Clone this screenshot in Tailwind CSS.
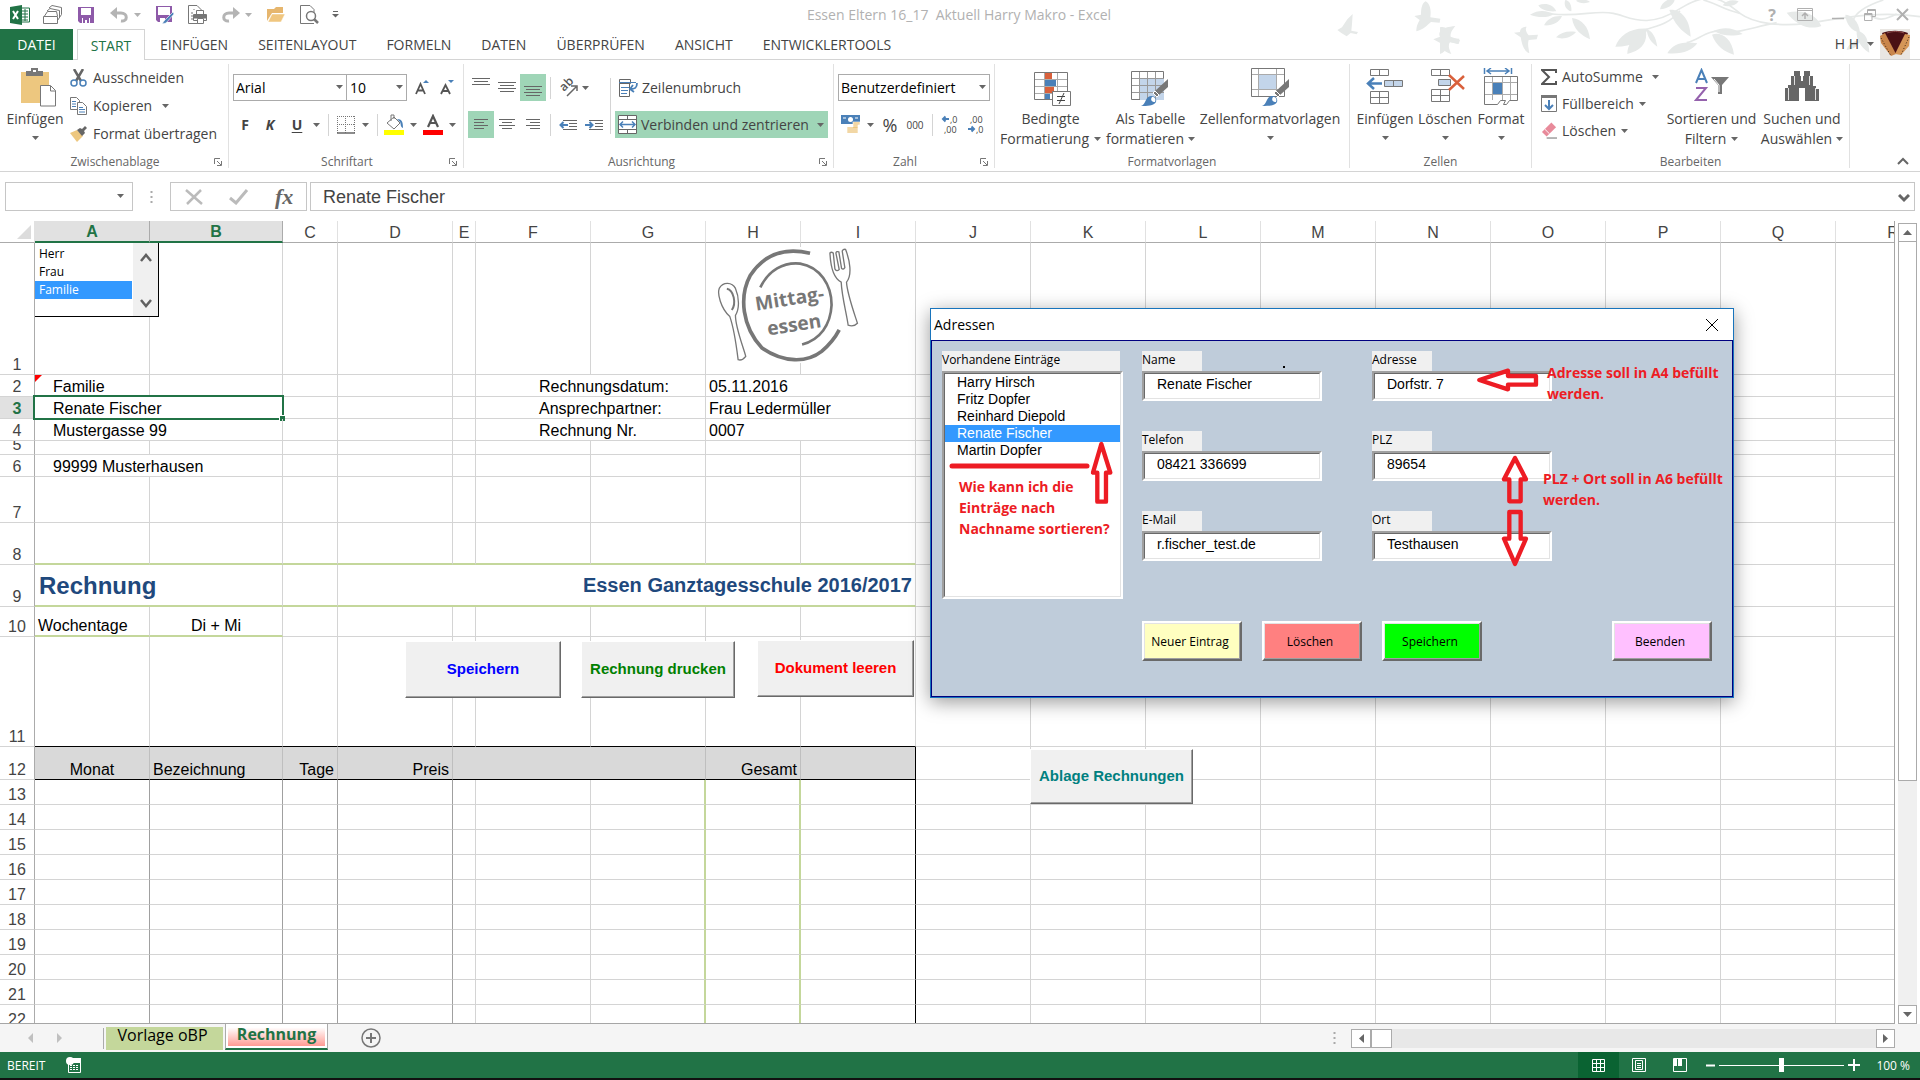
<!DOCTYPE html>
<html lang="de">
<head>
  <meta charset="UTF-8" />
  <meta name="viewport" content="width=device-width, initial-scale=1.0"/>
  <title>Essen Eltern 16_17  Aktuell Harry Makro - Excel</title>
  <script src="https://cdn.jsdelivr.net/npm/@tailwindcss/browser@4"></script>
</head>
<body class="h-screen flex flex-col overflow-hidden bg-white font-['Open_Sans',sans-serif] text-sm text-[#444]">

  <!-- Shared shapes -->
  <svg class="hidden">
    <symbol id="caret" viewBox="0 0 7 4"><path d="M0 0h7L3.500 4z" fill="#666"/></symbol>
    <symbol id="launcher" viewBox="0 0 8 8"><path d="M.5 6V.5H6M3 3l4 4M7.500 3v4.500H3" fill="none" stroke="#777"/></symbol>
    <symbol id="brush" viewBox="0 0 28 28"><path d="M27 1v8l-9 8-4-4z" fill="#777"/><path d="M14 13l4 4-2 2-4-4z" fill="#777" stroke="#fff"/><path d="M0 28c5-1 4-10 10-10 4 0 6 3 5 6-2 4-9 4-15 4z" fill="#4a80b8"/><path d="M11 19c3 0 4 2 3 5-3 0-5-2-3-5z" fill="#fff"/></symbol>
  </svg>

  <!-- Title bar -->
  <header class="relative shrink-0">
    <svg class="absolute right-0 top-0" width="590" height="58" viewBox="0 0 1770 174" fill="#e6e9e8" stroke="none">
      <!-- birds -->
      <g transform="translate(-1050 0)">
        <path d="M1072 90l14-8 16-24 16-16-2 30-2 20 20 4-4 7-18-4-12 10-16-10z"/>
        <path d="M1303 48l20-4c0-20 4-36 14-40 12 6 18 26 14 48l30 4-2 12-26-2c-12 10-22 22-44 28 0-18 6-26 10-34z"/>
        <path d="M1360 118l20-8c-6-14 2-28 46-32-10 12-16 22-14 32l28 10-4 12-26-6c-6 10-4 18 4 36-20-4-30-18-32-32z"/>
      </g>
      <g transform="translate(330 0)">
        <path d="M0 82c14-4 28 4 26 32l32 2-4 16-26-6c-2 12-8 28-28 36z"/>
        <path d="M222 98l18-2c0-10 8-16 20-16-6 8 0 18 6 26l28-2-4 14-24 2c-4 14 0 24 2 40-18-8-22-26-26-48z"/>
        <path d="M270 44c30-18 52-10 72-2-22 14-50 10-72 2zM295 16c20-8 44-4 54 18-26 2-46-4-54-18zM376 0c12 2 20 14 18 34-16-4-24-20-18-34zM408 2c14-6 34-4 42 4-14 6-34 4-42-4zM312 76c10-20 30-30 54-28-8 20-30 30-54 28zM396 54c30 4 50 26 54 64-26-12-50-30-54-64zM348 112c14-14 34-20 60-16-14 16-38 24-60 16z"/>
        <path d="M526 140c12-32 44-58 98-54-14 34-44 54-98 54zM562 162c0-26 16-54 56-66 4 32-14 56-56 66zM620 88c16 4 28 24 32 52-18-12-30-28-32-52zM660 28c4-20 22-32 44-34 2 16-16 32-44 34zM688 30c28-4 62 20 64 80-28-16-50-40-64-80zM682 160c16-28 44-38 90-30-16 22-46 34-90 30zM816 104c22-10 60 6 66 60-28-8-54-26-66-60zM822 92c26-12 60-10 86 10-32 8-62 6-86-10zM848 16c12-16 30-18 48-12-10 14-30 18-48 12z"/>
        <path d="M1040 38c44-10 86 0 104 40-36 14-76-4-104-40zM1216 44c18 0 42 20 44 54-26-6-42-26-44-54zM1220 150c4-16 20-26 38-30 0 16-16 28-38 30zM1250 92c30 4 36 32 38 66-26-16-40-40-38-66z"/>
        <g fill="none" stroke="#e6e9e8" stroke-width="5">
          <path d="M336 42C420 50 470 30 520 40s100 50 200-14S860 10 900 40s120 40 200 30 200-40 340-20"/>
          <path d="M610 92c30-14 70-12 110-60M740 128c40-10 60-40 110-34s80-10 160-26M900 40c-50-10-70-30-110-40M1240 60c10-30 60-50 90-60M1290 46c30 20 50 10 80-4"/>
        </g>
      </g>
    </svg>

    <div class="relative h-[29px] flex items-center justify-between pl-[10px] pr-[11px]">
      <div class="flex items-center">
        <svg width="20" height="20" viewBox="0 0 20 20"><path d="M10 3h9.500v14H10" fill="#fff" stroke="#217346"/><path d="M12 6h6M12 9h6M12 12h6M12 15h6M15 4v12" stroke="#217346"/><path d="M0 2l12-2v20L0 18z" fill="#217346"/><path d="M3 6l5 8M8 6l-5 8" stroke="#fff" stroke-width="2"/></svg>
        <svg class="ml-[13px]" width="20" height="20" viewBox="0 0 20 20" fill="#fff" stroke="#777"><path d="M6 3l3-2.500 9.500 2v7l-4 6M4 6l3-2.500 9.500 2v7M1.500 11l3-4.500h9l1 4.500"/><path d="M.5 11.500h14v7H.5z"/></svg>
        <svg class="ml-[15px]" width="16" height="16" viewBox="0 0 16 16"><path d="M0 0h16v16H2l-2-2z" fill="#8e5aa9"/><path d="M3 1h10v7H3zM4 11h8v5H4z" fill="#fff"/><path d="M5 11h6v5H9v-3H7v3H5z" fill="#8e5aa9"/></svg>
        <svg class="ml-4" width="19" height="16" viewBox="0 0 19 16"><path d="M2 6h9c7 0 7 9 0 8" fill="none" stroke="#b4b4b4" stroke-width="3"/><path d="M0 6l7-6v12z" fill="#b4b4b4"/></svg>
        <svg class="ml-[5px] opacity-50" width="7" height="4"><use href="#caret"/></svg>
        <svg class="ml-[15px]" width="18" height="18" viewBox="0 0 18 18"><path d="M0 0h16v16H2l-2-2z" fill="#8e5aa9"/><path d="M2 1h12v8H2zM4 12h5v4H4z" fill="#fff"/><path d="M17 6l-9 9-2 3 4-1 8-9z" fill="#4a80b8" stroke="#fff" stroke-width=".6"/></svg>
        <svg class="ml-[14px]" width="20" height="20" viewBox="0 0 20 20" fill="#fff" stroke="#777"><path d="M11 18.500H.5V.5H9l5 5"/><path d="M4 7v9M6 4v1" stroke-dasharray="2 1"/><path d="M8.500 5.500h7v4h-7zM5.500 9.500h13v6h-13z"/><path d="M6 10h12v3H6z" fill="#777"/><path d="M9.500 13.500h6v5h-6z"/></svg>
        <svg class="ml-[13px]" width="19" height="16" viewBox="0 0 19 16"><path d="M17 6H8c-7 0-7 9 0 8" fill="none" stroke="#b4b4b4" stroke-width="3"/><path d="M19 6l-7-6v12z" fill="#b4b4b4"/></svg>
        <svg class="ml-[5px] opacity-50" width="7" height="4"><use href="#caret"/></svg>
        <svg class="ml-[15px]" width="19" height="15" viewBox="0 0 19 15"><path d="M0 14V2h7l2-2h7v6H5z" fill="#e6b66e"/><path d="M1 15l4-8h13l-4 8z" fill="#f0c67f" stroke="#fff" stroke-width=".5"/></svg>
        <svg class="ml-[14px]" width="19" height="19" viewBox="0 0 19 19" fill="none" stroke="#777"><path d="M14 18.500H.5V.5H10l4 4V7"/><circle cx="11" cy="11" r="4.500" fill="#fff" stroke-width="1.500"/><path d="M14 14l4 4" stroke-width="2.500"/></svg>
        <svg class="ml-[13px]" width="7" height="7" viewBox="0 0 7 7"><path d="M1 .5h5" stroke="#666"/><path d="M0 3h7L3.500 6.500z" fill="#666"/></svg>
      </div>
      <h1 class="absolute inset-x-0 -ml-[2px] text-center text-sm text-[#b1b1b1] whitespace-pre">Essen Eltern 16_17  Aktuell Harry Makro - Excel</h1>
      <div class="flex items-center text-[#b0b0b0]">
        <button class="w-[10px] mr-5 font-bold text-base leading-none" aria-label="Hilfe">?</button>
        <svg class="mr-[19px]" width="16" height="13" viewBox="0 0 16 13" fill="none" stroke="#b0b0b0"><path d="M.5.5h15v12H.500zM0 2.500h16"/><path d="M8 11V5M5 8l3-3 3 3" stroke-width="1.500"/></svg>
        <svg class="mr-5" width="12" height="12"><path d="M0 9.500h12" stroke="#b0b0b0" stroke-width="1.500"/></svg>
        <svg class="mr-5" width="12" height="12" viewBox="0 0 12 12" fill="none" stroke="#b0b0b0"><path d="M3.500 4V.5h8v7H8M3 1.500h8"/><path d="M.5 4.500H8v7H.5zM0 5.500h8"/></svg>
        <svg width="13" height="13"><path d="M1 1l11 11M12 1L1 12" stroke="#b0b0b0" stroke-width="2"/></svg>
      </div>
    </div>

    <!-- Ribbon tabs -->
    <nav class="relative h-[31px] flex items-center border-b border-[#d4d4d4]">
      <a href="#" class="w-[73px] h-[31px] mt-px leading-[31px] text-center text-white bg-[#217346]">DATEI</a>
      <a href="#" class="w-[68px] h-[31px] ml-1 mt-px leading-[31px] text-center text-[#217346] bg-white border border-b-0 border-[#d4d4d4]">START</a>
      <div class="flex gap-[30px] ml-[15px] pt-[2px]">
        <a href="#">EINFÜGEN</a>
        <a href="#">SEITENLAYOUT</a>
        <a href="#">FORMELN</a>
        <a href="#">DATEN</a>
        <a href="#">ÜBERPRÜFEN</a>
        <a href="#">ANSICHT</a>
        <a href="#">ENTWICKLERTOOLS</a>
      </div>
      <div class="ml-auto flex items-center pr-[10px]">
        <span>H H</span>
        <svg class="ml-2 mr-[6px]" width="7" height="4"><use href="#caret"/></svg>
        <svg width="30" height="30" viewBox="0 0 30 30"><path d="M0 0h30v30H0z" fill="#e9e6e2"/><path d="M2 4c8-3 18-3 26 0l-7 20H10z" fill="#4a1014"/><path d="M9 24h12l-2 3h-8z" fill="#e9e6e2"/><path d="M7 4c5-2 12-2 17 0" stroke="#8c4a4a" fill="none"/><path d="M0 7l5-3 11 21-5 2-10-13z" fill="#c9854a"/><path d="M30 6l-5-1-10 20 6 1 8-9z" fill="#d59657"/><path d="M1 9l10 18M29 8l-8 18" stroke="#3b2413" stroke-dasharray="1 2"/></svg>
      </div>
    </nav>
  </header>

  <!-- Ribbon -->
  <section class="h-[112px] shrink-0 flex pt-1 border-b border-[#d4d4d4] leading-5 whitespace-nowrap">

    <div class="w-[229px] h-[104px] border-r border-[#e1e1e1]">
      <div class="h-[91px] flex">
        <button class="w-[70px] pt-1 flex flex-col items-center">
          <svg class="ml-2" width="36" height="39" viewBox="0 0 36 39"><path d="M0 4h28v31H0z" fill="#edc77f"/><path d="M5 8V3h5V0h7v3h5v5z" fill="#777"/><path d="M12 2h3v2h-3z" fill="#fff"/><path d="M19.500 17.500h10l5 5V38h-15z" fill="#fff" stroke="#777"/><path d="M29.500 18v5h5" fill="none" stroke="#777"/></svg>
          <span class="mt-[2px]">Einfügen</span>
          <svg class="mt-[7px]" width="7" height="4"><use href="#caret"/></svg>
        </button>
        <div class="flex flex-col items-start">
          <button class="h-7 flex items-center gap-[6px]">
            <svg width="17" height="18" viewBox="0 0 17 18" fill="none"><path d="M4 0l7 12M13 0L6 12" stroke="#666" stroke-width="2.500"/><circle cx="4" cy="14" r="3" stroke="#4a80b8" stroke-width="1.500"/><circle cx="13" cy="14" r="3" stroke="#4a80b8" stroke-width="1.500"/></svg>
            Ausschneiden
          </button>
          <button class="h-7 flex items-center gap-[6px]">
            <svg width="17" height="18" viewBox="0 0 17 18" fill="#fff" stroke="#777"><path d="M.5.5h6l3 3v9h-9z"/><path d="M7.500 5.500h5l4 4v8h-9z"/><path d="M2 4.500h4M2 7h4M2 9.500h4M9 10.500h4M9 12.500h6M9 15h6" stroke="#4a80b8"/></svg>
            Kopieren
            <svg class="ml-1" width="7" height="4"><use href="#caret"/></svg>
          </button>
          <button class="h-7 flex items-center gap-[6px]">
            <svg width="17" height="16" viewBox="0 0 17 16"><path d="M0 7l7-3 6 6-6 6z" fill="#edc77f"/><path d="M7 4l3-2 2 1 3-3 2 2-3 3 1 2-3 3z" fill="#666"/></svg>
            Format übertragen
          </button>
        </div>
      </div>
      <div class="flex items-center text-xs leading-[14px] text-[#666]"><span class="flex-1 text-center pl-4">Zwischenablage</span><svg class="mr-[6px]" width="8" height="8"><use href="#launcher"/></svg></div>
    </div>

    <div class="w-[235px] h-[104px] border-r border-[#e1e1e1]">
      <div class="h-[91px] pt-[10px] pl-1">
        <div class="flex items-center">
          <div class="relative"><select aria-label="Schriftart" class="w-[114px] h-[27px] pl-[2px] appearance-none border border-[#ababab] text-black"><option>Arial</option></select><svg class="absolute right-1 top-[11px]" width="7" height="4"><use href="#caret"/></svg></div>
          <div class="relative -ml-px"><select aria-label="Schriftgrad" class="w-[61px] h-[27px] pl-[3px] appearance-none border border-[#ababab] text-black"><option>10</option></select><svg class="absolute right-1 top-[11px]" width="7" height="4"><use href="#caret"/></svg></div>
          <svg class="ml-2" width="14" height="16" viewBox="0 0 14 16"><path d="M1 14L5.500 4 10 14M2.500 10.500h6" fill="none" stroke="#555" stroke-width="1.800"/><path d="M8 3h6l-3-3z" fill="#4a80b8"/></svg>
          <svg class="ml-[11px]" width="14" height="16" viewBox="0 0 14 16"><path d="M1 14L5.500 5 10 14M2.500 11h6" fill="none" stroke="#555" stroke-width="1.800"/><path d="M8 0h6l-3 3z" fill="#4a80b8"/></svg>
        </div>
        <div class="h-[27px] mt-[10px] flex items-center">
          <button class="w-[10px] ml-[7px] font-bold">F</button>
          <button class="w-3 ml-[14px] font-bold italic">K</button>
          <button class="w-3 ml-[15px] font-bold underline underline-offset-2">U</button>
          <svg class="ml-[10px]" width="7" height="4"><use href="#caret"/></svg>
          <i class="w-px h-[22px] ml-2 bg-[#d4d4d4]"></i>
          <svg class="ml-2" width="18" height="18" viewBox="0 0 18 18"><path d="M.5 0v17M17.500 0v17M0 .5h18M0 8.500h18M8.500 0v17" stroke="#777" stroke-dasharray="1 1"/><path d="M0 17h18" stroke="#666" stroke-width="1.500"/></svg>
          <svg class="ml-[7px]" width="7" height="4"><use href="#caret"/></svg>
          <i class="w-px h-[22px] ml-2 bg-[#d4d4d4]"></i>
          <svg class="ml-[6px]" width="20" height="21" viewBox="0 0 20 21"><path d="M3 9l7-6 6 6-6 6zM7 7V1h3v4" fill="#fff" stroke="#777"/><path d="M13 5c5 0 6 3 6 9-3-1-2-5-3-6z" fill="#4a80b8"/><path d="M0 16h20v5H0z" fill="#ff0"/></svg>
          <svg class="ml-[6px]" width="7" height="4"><use href="#caret"/></svg>
          <svg class="ml-[6px]" width="20" height="21" viewBox="0 0 20 21"><path d="M5 13l5-11 5 11M6.500 9h7" fill="none" stroke="#555" stroke-width="2.200"/><path d="M0 16h20v5H0z" fill="red"/></svg>
          <svg class="ml-[6px]" width="7" height="4"><use href="#caret"/></svg>
        </div>
      </div>
      <div class="flex items-center text-xs leading-[14px] text-[#666]"><span class="flex-1 text-center pl-4">Schriftart</span><svg class="mr-[6px]" width="8" height="8"><use href="#launcher"/></svg></div>
    </div>

    <div class="w-[370px] h-[104px] border-r border-[#e1e1e1]">
      <div class="h-[91px] pt-[10px] pl-1 flex">
        <div class="w-[142px]">
          <div class="flex items-center">
            <svg width="26" height="27" fill="none" stroke="#666"><path d="M4 4.500h18M6 7.500h14M4 10.500h18"/></svg>
            <svg width="26" height="27" fill="none" stroke="#666"><path d="M4 8.500h18M6 11.500h14M4 14.500h18M6 17.500h14"/></svg>
            <svg class="bg-[#9fd5b7]" width="26" height="27" fill="none" stroke="#666"><path d="M4 12.500h18M6 15.500h14M4 18.500h18M6 21.500h14"/></svg>
            <i class="w-px h-[22px] ml-1 bg-[#d4d4d4]"></i>
            <svg class="ml-2 overflow-visible" width="19" height="18" viewBox="0 0 19 18"><text transform="translate(5 13) rotate(-45)" font-size="12" font-weight="600" fill="#555">ab</text><path d="M8 17l9-9M12 7h6v5" fill="none" stroke="#666" stroke-width="1.500"/></svg>
            <svg class="ml-1" width="7" height="4"><use href="#caret"/></svg>
          </div>
          <div class="flex items-center mt-[10px]">
            <svg class="bg-[#9fd5b7]" width="26" height="27" fill="none" stroke="#666"><path d="M6 8.500h14M6 11.500h10M6 14.500h14M6 17.500h10"/></svg>
            <svg width="26" height="27" fill="none" stroke="#666"><path d="M5 8.500h16M8 11.500h10M5 14.500h16M8 17.500h10"/></svg>
            <svg width="26" height="27" fill="none" stroke="#666"><path d="M6 8.500h14M10 11.500h10M6 14.500h14M10 17.500h10"/></svg>
            <i class="w-px h-[22px] ml-1 bg-[#d4d4d4]"></i>
            <svg class="ml-2" width="18" height="12" viewBox="0 0 18 12" fill="none" stroke="#666"><path d="M4 1.500h14M10 4.500h8M10 7.500h8M4 10.500h14"/><path d="M9 6H2M4.500 3L1.500 6l3 3" stroke="#4a80b8" stroke-width="2"/></svg>
            <svg class="ml-2" width="18" height="12" viewBox="0 0 18 12" fill="none" stroke="#666"><path d="M4 1.500h14M10 4.500h8M10 7.500h8M4 10.500h14"/><path d="M0 6h7M4.500 3l3 3-3 3" stroke="#4a80b8" stroke-width="2"/></svg>
          </div>
        </div>
        <i class="w-px h-14 mt-1 mr-1 bg-[#d4d4d4]"></i>
        <div class="flex flex-col">
          <button class="h-[27px] px-1 flex items-center gap-1">
            <svg width="19" height="18" viewBox="0 0 19 18" fill="#fff" stroke="#666"><path d="M.5.5h11v4H.5zM.5 4.500h10v13H.5z"/><path d="M0 3.500h17M2 8.500h8M2 11.500h7M2 14.500h6" stroke="#4a80b8"/><path d="M18 4c0 5-2 6-7 6M14 6l-3 4 4 3" fill="none" stroke="#4a80b8" stroke-width="1.800"/></svg>
            Zeilenumbruch
          </button>
          <button class="w-[213px] h-[27px] mt-[10px] pl-[3px] pr-1 flex items-center gap-1 bg-[#9fd5b7]">
            <svg width="19" height="19" viewBox="0 0 19 19" fill="#fff" stroke="#666"><path d="M.5.5h18v18H.5zM.5 4.500h18M.5 14.500h18M9.500 0v4M9.500 15v4"/><path d="M2 9.500h15M5 6.500l-3 3 3 3M14 6.500l3 3-3 3" fill="none" stroke="#4a80b8" stroke-width="1.500"/></svg>
            Verbinden und zentrieren
            <svg class="ml-auto" width="7" height="4"><use href="#caret"/></svg>
          </button>
        </div>
      </div>
      <div class="flex items-center text-xs leading-[14px] text-[#666]"><span class="flex-1 text-center">Ausrichtung</span><svg class="mr-[6px]" width="8" height="8"><use href="#launcher"/></svg></div>
    </div>

    <div class="w-[161px] h-[104px] border-r border-[#e1e1e1]">
      <div class="h-[91px] pt-[10px] pl-1">
        <div class="relative w-[152px]"><select aria-label="Zahlenformat" class="w-full h-[27px] pl-[2px] appearance-none border border-[#ababab] text-black"><option>Benutzerdefiniert</option></select><svg class="absolute right-1 top-[11px]" width="7" height="4"><use href="#caret"/></svg></div>
        <div class="h-[27px] mt-[10px] pl-[3px] flex items-center">
          <svg width="19" height="19" viewBox="0 0 19 19"><path d="M0 0h19v9H0z" fill="#4a80b8"/><path d="M2 3h3M14 3h3" stroke="#fff"/><circle cx="9.500" cy="4.500" r="2.500" fill="#fff"/><path d="M12 7h7v3h-2v8H6v-6h6z" fill="#edc77f" stroke="#fff" stroke-width=".6"/><path d="M6 14h11M6 16h11M12 9h7M12 11h6" stroke="#fff" stroke-width=".6"/></svg>
          <svg class="ml-[7px]" width="7" height="4"><use href="#caret"/></svg>
          <button class="w-4 ml-2 text-lg">%</button>
          <button class="w-[18px] ml-2 text-[10px]">000</button>
          <i class="w-px h-[22px] ml-2 bg-[#d4d4d4]"></i>
          <svg class="ml-[9px] overflow-visible" width="16" height="19" viewBox="0 0 16 19" font-size="9" fill="#444"><text x="8" y="8">,0</text><text x="2" y="18">,00</text><path d="M7 4H1M3.500 1.500L1 4l2.500 2.500" fill="none" stroke="#4a80b8" stroke-width="2"/></svg>
          <svg class="ml-[10px] overflow-visible" width="16" height="19" viewBox="0 0 16 19" font-size="9" fill="#444"><text x="2" y="8">,00</text><text x="8" y="18">,0</text><path d="M0 14h6M3.500 11.500L6 14l-2.500 2.500" fill="none" stroke="#4a80b8" stroke-width="2"/></svg>
        </div>
      </div>
      <div class="flex items-center text-xs leading-[14px] text-[#666]"><span class="flex-1 text-center pr-1">Zahl</span><svg class="mr-[6px]" width="8" height="8"><use href="#launcher"/></svg></div>
    </div>

    <div class="w-[355px] h-[104px] border-r border-[#e1e1e1]">
      <div class="h-[91px] flex pl-1 gap-1">
        <button class="w-[103px] pt-1 flex flex-col items-center">
          <svg class="ml-4" width="60" height="40" viewBox="0 0 60 40"><path d="M5.500 4.500h33v27h-33z" fill="#fff" stroke="#777"/><path d="M6 11.500h32M6 18.500h32M6 25.500h32M15.500 5v26M28.500 5v26" stroke="#aaa"/><path d="M16 5h7v6h-7zM16 19h9v6h-9z" fill="#d9603b"/><path d="M16 12h11v6H16zM16 26h5v5h-5z" fill="#4a80b8"/><path d="M23.500 23.500h18v14h-18z" fill="#fff" stroke="#777"/><path d="M28 28.500h8M28 32.500h8M35 25l-5 11" stroke="#444"/></svg>
          <span class="mt-px">Bedingte</span>
          <span class="flex items-center gap-[5px]">Formatierung<svg width="7" height="4"><use href="#caret"/></svg></span>
        </button>
        <button class="w-[89px] pt-1 flex flex-col items-center">
          <svg class="mr-[2px]" width="40" height="40" viewBox="0 0 40 40"><path d="M1.500 3.500h32v28h-32z" fill="#fff" stroke="#777"/><path d="M10 11h24v21H10z" fill="#c3d5ea"/><path d="M2 10.500h32M2 17.500h32M2 24.500h32M9.500 4v27M17.500 4v27M25.500 4v27" stroke="#999"/><use href="#brush" x="11" y="10" width="28" height="28"/></svg>
          <span class="mt-px">Als Tabelle</span>
          <span class="flex items-center gap-1">formatieren<svg width="7" height="4"><use href="#caret"/></svg></span>
        </button>
        <button class="w-[142px] pt-1 flex flex-col items-center">
          <svg width="40" height="40" viewBox="0 0 40 40"><path d="M1.500.5h33v28h-33z" fill="#fff" stroke="#777"/><path d="M9 7h17v14H9z" fill="#c3d5ea"/><path d="M2 6.500h32M2 21.500h32M8.500 1v27M26.500 1v27" stroke="#aaa"/><use href="#brush" x="12" y="10" width="28" height="28"/></svg>
          <span class="mt-px">Zellenformatvorlagen</span>
          <svg class="mt-[7px]" width="7" height="4"><use href="#caret"/></svg>
        </button>
      </div>
      <div class="text-center text-xs leading-[14px] text-[#666]">Formatvorlagen</div>
    </div>

    <div class="w-[182px] h-[104px] border-r border-[#e1e1e1]">
      <div class="h-[91px] flex pl-[6px] gap-1">
        <button class="w-[58px] pt-1 flex flex-col items-center">
          <svg width="38" height="40" viewBox="0 0 38 40" fill="#fff" stroke="#777"><path d="M4.500 1.500h18v6h-18zM13.500 1v6M4.500 23.500h18v12h-18zM4.500 29.500h18M13.500 23v12"/><path d="M18.500 12.500h18v6h-18zM27.500 12v6" fill="#c3d5ea"/><path d="M16 15.500H3M8 10l-6 5.500L8 21" fill="none" stroke="#4a80b8" stroke-width="2.500"/></svg>
          <span class="mt-px">Einfügen</span>
          <svg class="mt-[7px]" width="7" height="4"><use href="#caret"/></svg>
        </button>
        <button class="w-[54px] pt-1 flex flex-col items-center">
          <svg class="ml-1" width="38" height="40" viewBox="0 0 38 40" fill="#fff" stroke="#777"><path d="M3.500 1.500h18v6h-18zM12.500 1v6M3.500 21.500h18v12h-18zM3.500 27.500h18M12.500 21v12"/><path d="M10.500 11.500h12v6h-12z" fill="#c3d5ea"/><path d="M21 7l15 14M36 8L21 22" stroke="#d9603b" stroke-width="2.500"/></svg>
          <span class="mt-px">Löschen</span>
          <svg class="mt-[7px]" width="7" height="4"><use href="#caret"/></svg>
        </button>
        <button class="w-[50px] pt-1 flex flex-col items-center">
          <svg width="36" height="40" viewBox="0 0 36 40" fill="#fff" stroke="#777"><path d="M1.500 8.500h33v24h-8l-3 4h-3l2-4h-5l-3 4h-13z"/><path d="M2 14.500h32M2 26.500h32M9.500 9v23M19.500 9v23M27.500 9v23" stroke="#aaa"/><path d="M10 15h9v11h-9z" fill="#4a80b8" stroke="none"/><path d="M1.500 0v6M28.500 0v6M4 3h22M8 0L4 3l4 3M22 0l4 3-4 3" fill="none" stroke="#4a80b8" stroke-width="1.500"/></svg>
          <span class="mt-px">Format</span>
          <svg class="mt-[7px]" width="7" height="4"><use href="#caret"/></svg>
        </button>
      </div>
      <div class="text-center text-xs leading-[14px] text-[#666]">Zellen</div>
    </div>

    <div class="w-[318px] h-[104px] border-r border-[#e1e1e1]">
      <div class="h-[91px] flex pl-[9px]">
        <div class="w-[124px] -mt-px flex flex-col items-start">
          <button class="h-[27px] flex items-center gap-[5px]">
            <svg width="16" height="16" viewBox="0 0 16 16"><path d="M15 4V1H1l7 7-7 7h14v-3" fill="none" stroke="#555" stroke-width="2"/></svg>
            AutoSumme
            <svg class="ml-1" width="7" height="4"><use href="#caret"/></svg>
          </button>
          <button class="h-[27px] flex items-center gap-[5px]">
            <svg width="16" height="17" viewBox="0 0 16 17"><path d="M.5.500h15v16H.5z" fill="#fff" stroke="#777"/><path d="M0 0h16v3H0z" fill="#777"/><path d="M8 5v9M4 10l4 4 4-4" fill="none" stroke="#4a80b8" stroke-width="2"/></svg>
            Füllbereich
            <svg width="7" height="4"><use href="#caret"/></svg>
          </button>
          <button class="h-[27px] flex items-center gap-[5px]">
            <svg width="16" height="17" viewBox="0 0 17 17"><path d="M1 10L11 0l5 5L6 15z" fill="#e88a9a"/><path d="M4 7l5 5" stroke="#fff"/><path d="M6 16.500h11" stroke="#666"/></svg>
            Löschen
            <svg width="7" height="4"><use href="#caret"/></svg>
          </button>
        </div>
        <button class="w-[93px] pt-1 flex flex-col items-center">
          <svg width="36" height="40" viewBox="0 0 36 40"><path d="M2 15L7.500 2 13 15M4 11h7" fill="none" stroke="#4a80b8" stroke-width="2"/><path d="M2 20h10L2 32h11" fill="none" stroke="#9562ad" stroke-width="2"/><path d="M17 9h18l-7 8v9h-4v-9z" fill="#777"/><path d="M20 11l5 6v7" fill="none" stroke="#fff"/></svg>
          <span class="mt-px">Sortieren und</span>
          <span class="flex items-center gap-[5px]">Filtern<svg width="7" height="4"><use href="#caret"/></svg></span>
        </button>
        <button class="w-[88px] pt-1 flex flex-col items-center">
          <svg width="34" height="40" viewBox="0 0 34 40"><path d="M9 3h6v5h1v5h2V8h1V3h6v5h3v10h3v3h3v12H20V20h-6v13H0V20h3v-3h3V8h3z" fill="#666"/><path d="M3.500 20v12M30.500 20v12M9.500 8v9M24.500 8v9" stroke="#fff" stroke-width=".8"/></svg>
          <span class="mt-px">Suchen und</span>
          <span class="flex items-center gap-1">Auswählen<svg width="7" height="4"><use href="#caret"/></svg></span>
        </button>
      </div>
      <div class="text-center text-xs leading-[14px] text-[#666]">Bearbeiten</div>
    </div>
    <svg class="ml-auto mr-[11px] mt-[93px]" width="12" height="8"><path d="M1 7l5-5 5 5" fill="none" stroke="#666" stroke-width="2"/></svg>
  </section>

  <!-- Formula bar -->
  <section class="h-[39px] mb-[10px] shrink-0 flex items-end pl-[5px] pr-[5px]">
    <div class="relative"><input aria-label="Namenfeld" class="block w-[128px] h-[29px] border border-[#c6c6c6]" /><svg class="absolute right-[9px] top-3" width="7" height="4"><use href="#caret"/></svg></div>
    <svg class="mx-[17px] mb-2" width="3" height="12"><path d="M1.500 0v12" stroke="#aaa" stroke-width="2" stroke-dasharray="2 3"/></svg>
    <div class="w-[137px] h-[29px] flex items-center justify-between pl-[14px] pr-[11px] border border-[#c6c6c6]">
      <svg width="18" height="16"><path d="M1 1l16 14M16 1L2 15" stroke="#bbb" stroke-width="2.500"/></svg>
      <svg width="20" height="16"><path d="M1 9l6 5L18 1" fill="none" stroke="#bbb" stroke-width="3"/></svg>
      <i class="w-5 font-['Liberation_Serif',serif] font-bold text-[22px] leading-6 text-[#666]">fx</i>
    </div>
    <input aria-label="Bearbeitungsleiste" value="Renate Fischer" class="block h-[29px] ml-[3px] pl-3 pt-[2px] flex-1 border border-r-0 border-[#c6c6c6] font-['Liberation_Sans',sans-serif] text-lg leading-6 text-[#444]" />
    <div class="w-[22px] h-[29px] flex items-center justify-center pt-1 border border-l-0 border-[#c6c6c6]"><svg width="12" height="9"><path d="M1 1l5 5 5-5" fill="none" stroke="#666" stroke-width="3"/></svg></div>
  </section>

  <!-- Worksheet -->
  <main class="flex-1 min-h-0 flex">
    <div class="relative flex-1 overflow-hidden border-r border-b border-[#a6a6a6] font-['Liberation_Sans',sans-serif]">
      <table id="sheet" class="table-fixed border-separate border-spacing-0 text-base leading-[18px] text-black whitespace-nowrap"></table>

      <!-- Salutation list -->
      <div class="absolute left-[35px] top-[22px] w-[124px] h-[74px] flex bg-white border-r border-b border-black">
        <select size="4" aria-label="Anrede" class="w-[97px] h-[72px] pt-[2px] appearance-none overflow-hidden [scrollbar-width:none] font-['Open_Sans',sans-serif] text-xs text-black">
          <option class="h-[18px] min-h-0 px-1 py-0 leading-[18px]">Herr</option>
          <option class="h-[18px] min-h-0 px-1 py-0 leading-[18px]">Frau</option>
          <option selected class="h-[18px] min-h-0 px-1 py-0 leading-[18px] checked:bg-[linear-gradient(#3399ff,#3399ff)] [-webkit-text-fill-color:#fff]">Familie</option>
        </select>
        <div class="ml-px w-[25px] flex flex-col items-center justify-between pt-[10px] pb-2 bg-[#f0f0f0]">
          <svg width="12" height="10"><path d="M1 8l5-6 5 6" fill="none" stroke="#606060" stroke-width="2.500"/></svg>
          <svg width="12" height="10"><path d="M1 2l5 6 5-6" fill="none" stroke="#606060" stroke-width="2.500"/></svg>
        </div>
      </div>

      <!-- Logo -->
      <svg class="absolute left-[717px] top-[26px] bg-white" width="143" height="116" viewBox="650 80 430 350" fill="none" stroke="#777">
        <path d="M930 99C850 80 790 105 750 165C715 230 725 320 785 385C850 430 920 430 965 395Q1000 365 1018 330" stroke-width="11"/>
        <path d="M780 202C805 150 850 125 900 130C960 140 995 195 995 255C992 315 960 360 906 374" stroke-width="8"/>
        <g stroke-width="4">
          <path d="M688 290C660 265 650 220 656 205C668 184 695 186 705 205C718 235 716 270 705 286C704 320 728 380 736 410Q725 424 713 420C708 380 702 330 688 290z"/>
          <path d="M679 206C700 210 708 250 694 270" stroke-width="6"/>
          <path d="M990 98C992 140 1002 175 1024 186C1026 230 1040 280 1045 316Q1062 322 1073 310C1060 270 1042 220 1040 186C1058 165 1050 120 1037 87Q1030 86 1027 92L1035 142Q1030 150 1025 144L1017 95Q1010 92 1008 98L1018 148Q1010 155 1005 146L1000 98Q994 94 990 98z"/>
        </g>
        <g fill="#777" stroke="none" font-family="Open Sans, sans-serif" font-weight="700" font-size="58">
          <text transform="translate(768 272) rotate(-9)">Mittag-</text>
          <text transform="translate(804 347) rotate(-9)">essen</text>
        </g>
      </svg>

      <!-- Macro buttons -->
      <button class="absolute left-[405px] top-[420px] w-[156px] h-[57px] pb-[2px] bg-[#f0f0f0] border border-t-white border-l-white border-r-[#696969] border-b-[#696969] shadow-[inset_-1px_-1px_#a0a0a0] font-bold text-[15px] text-[#0000ff]">Speichern</button>
      <button class="absolute left-[581px] top-[420px] w-[154px] h-[57px] pb-[2px] bg-[#f0f0f0] border border-t-white border-l-white border-r-[#696969] border-b-[#696969] shadow-[inset_-1px_-1px_#a0a0a0] font-bold text-[15px] text-[#008000]">Rechnung drucken</button>
      <button class="absolute left-[757px] top-[419px] w-[157px] h-[57px] pb-[2px] bg-[#f0f0f0] border border-t-white border-l-white border-r-[#696969] border-b-[#696969] shadow-[inset_-1px_-1px_#a0a0a0] font-bold text-[15px] text-[#ff0000]">Dokument leeren</button>
      <button class="absolute left-[1030px] top-[528px] w-[163px] h-[55px] pb-[2px] bg-[#f0f0f0] border border-t-white border-l-white border-r-[#696969] border-b-[#696969] shadow-[inset_-1px_-1px_#a0a0a0] font-bold text-[15px] text-[#008080]">Ablage Rechnungen</button>

      <!-- Address form -->
      <div role="dialog" aria-label="Adressen" class="absolute left-[930px] top-[87px] w-[804px] h-[390px] flex flex-col bg-white border border-[#1874bc] shadow-[0_4px_18px_rgba(0,0,0,0.4)] font-['Open_Sans',sans-serif] text-black">
        <div class="h-[31px] shrink-0 flex items-center justify-between pl-[3px] pr-[14px]">
          <h2>Adressen</h2>
          <svg width="14" height="14"><path d="M1 1l12 12M13 1L1 13" stroke="#000"/></svg>
        </div>
        <form class="flex-1 flex gap-5 p-[10px] pr-5 bg-[#bfccda] border border-[#000080] text-xs">
          <div class="w-[180px]">
            <label for="entries" class="block w-[178px] h-5 leading-[18px] bg-[#f0f0f0]">Vorhandene Einträge</label>
            <div class="w-[181px] h-[228px] border-2 border-t-[#a0a0a0] border-l-[#a0a0a0] border-r-white border-b-white">
              <select id="entries" size="5" class="block w-full h-full appearance-none overflow-hidden [scrollbar-width:none] bg-white border border-t-[#696969] border-l-[#696969] border-r-[#e3e3e3] border-b-[#e3e3e3] font-['Liberation_Sans',sans-serif] text-sm">
                <option class="h-[17px] min-h-0 pl-3 py-0 leading-[19px]">Harry Hirsch</option>
                <option class="h-[17px] min-h-0 pl-3 py-0 leading-[19px]">Fritz Dopfer</option>
                <option class="h-[17px] min-h-0 pl-3 py-0 leading-[19px]">Reinhard Diepold</option>
                <option selected class="h-[17px] min-h-0 pl-3 py-0 leading-[19px] checked:bg-[linear-gradient(#3399ff,#3399ff)] [-webkit-text-fill-color:#fff]">Renate Fischer</option>
                <option class="h-[17px] min-h-0 pl-3 py-0 leading-[19px]">Martin Dopfer</option>
              </select>
            </div>
          </div>
          <div class="flex-1 flex flex-col">
            <div id="fields" class="grid grid-cols-[180px_180px] gap-x-[50px] gap-y-[30px]"></div>
            <div class="mt-[60px] flex gap-5">
              <button type="button" class="w-[100px] h-10 pt-[2px] pr-1 border-2 border-t-white border-l-white border-r-[#696969] border-b-[#696969] shadow-[inset_-1px_-1px_#a0a0a0,inset_1px_1px_#e3e3e3] bg-[#ffffc0]">Neuer Eintrag</button>
              <button type="button" class="w-[100px] h-10 pt-[2px] pr-1 border-2 border-t-white border-l-white border-r-[#696969] border-b-[#696969] shadow-[inset_-1px_-1px_#a0a0a0,inset_1px_1px_#e3e3e3] bg-[#ff8080]">Löschen</button>
              <button type="button" class="w-[100px] h-10 pt-[2px] pr-1 border-2 border-t-white border-l-white border-r-[#696969] border-b-[#696969] shadow-[inset_-1px_-1px_#a0a0a0,inset_1px_1px_#e3e3e3] bg-[#00ff00]">Speichern</button>
              <button type="button" class="w-[100px] h-10 pt-[2px] pr-1 ml-auto border-2 border-t-white border-l-white border-r-[#696969] border-b-[#696969] shadow-[inset_-1px_-1px_#a0a0a0,inset_1px_1px_#e3e3e3] bg-[#ffc0ff]">Beenden</button>
            </div>
          </div>
        </form>

        <!-- Red pen notes -->
        <svg class="absolute inset-0 pointer-events-none" width="802" height="388" fill="none" stroke="#ed1c24">
          <path d="M352 58h2" stroke="#000" stroke-width="2"/>
          <path d="M21 157h135" stroke-width="5" stroke-linecap="round"/>
          <g stroke-width="13" stroke-linejoin="round">
            <path transform="translate(-11 -9) scale(.3333)" d="M544 432L519 518h13v87h26v-87h13z"/>
            <path transform="translate(409 -9) scale(.3333)" d="M418 240l86-28v16h84v26h-84v14z"/>
            <path transform="translate(409 -9) scale(.3333)" d="M525 474L492 538h16v66h34v-66h16z"/>
            <path transform="translate(409 -9) scale(.3333)" d="M525 792L492 716h16v-80h34v80h16z"/>
          </g>
        </svg>
        <p class="absolute left-[28px] top-[167px] font-bold leading-[21px] text-[#ed1c24]">Wie kann ich die<br>Einträge nach<br>Nachname sortieren?</p>
        <p class="absolute left-[616px] top-[53px] font-bold leading-[21px] text-[#ed1c24] whitespace-nowrap">Adresse soll in A4 befüllt<br>werden.</p>
        <p class="absolute left-[612px] top-[159px] font-bold leading-[21px] text-[#ed1c24] whitespace-nowrap">PLZ + Ort soll in A6 befüllt<br>werden.</p>
      </div>
    </div>

    <!-- Vertical scrollbar -->
    <div class="w-[25px] px-[3px] pt-[2px] flex flex-col">
      <div class="h-[19px] flex items-center justify-center border border-[#ababab]"><svg width="9" height="5"><path d="M0 5h9L4.500 0z" fill="#666"/></svg></div>
      <div class="flex-1 bg-[#f0f0f0]"><div class="h-[540px] -mt-px bg-white border border-[#ababab]"></div></div>
      <div class="h-[19px] flex items-center justify-center border border-[#ababab]"><svg width="9" height="5"><path d="M0 0h9L4.500 5z" fill="#666"/></svg></div>
    </div>
  </main>

  <!-- Sheet tabs -->
  <nav class="relative h-7 shrink-0 flex items-center bg-[#f5f5f5] text-base">
    <svg class="ml-7" width="35" height="10"><path d="M5 0v10L0 5zM29 0v10l5-5z" fill="#c0c0c0"/></svg>
    <i class="w-px h-[21px] ml-10 bg-[#ababab]"></i>
    <a href="#" class="w-[117px] h-[23px] ml-[2px] pr-1 leading-4 text-center text-black bg-[#c4d79b]">Vorlage oBP</a>
    <a href="#" class="w-[103px] h-[26px] ml-[2px] -mt-[3px] px-[2px] pb-[2px] text-center font-bold text-[#217346] bg-white border-x border-x-[#ababab] border-b-2 border-b-[#217346]"><span class="block h-full leading-5 bg-linear-to-b from-white from-15% to-[#ff9a94]">Rechnung</span></a>
    <svg class="ml-[33px]" width="20" height="20" fill="none" stroke="#777"><circle cx="10" cy="10" r="9" stroke-width="1.500"/><path d="M10 5v10M5 10h10" stroke-width="2"/></svg>
    <div class="ml-auto mr-[25px] flex items-center">
      <svg class="mr-[15px]" width="3" height="12"><path d="M1.500 0v12" stroke="#aaa" stroke-width="2" stroke-dasharray="2 3"/></svg>
      <div class="w-5 h-[19px] flex items-center justify-center bg-white border border-[#ababab]"><svg width="5" height="9"><path d="M5 0v9L0 4.500z" fill="#666"/></svg></div>
      <div class="w-[505px] h-[19px] bg-[#e8e8e8]"><div class="w-[21px] h-full bg-white border border-[#ababab]"></div></div>
      <div class="w-[19px] h-[19px] flex items-center justify-center bg-white border border-[#ababab]"><svg width="5" height="9"><path d="M0 0v9l5-4.500z" fill="#666"/></svg></div>
    </div>
  </nav>

  <!-- Status bar -->
  <footer class="h-7 shrink-0 flex items-center pl-[7px] pr-[10px] bg-[#217346] border-b-2 border-[#111] text-xs text-white">
    <span class="pt-px">BEREIT</span>
    <svg class="ml-[21px]" width="16" height="16" viewBox="0 0 16 16"><path d="M2.500 3.500h12v12h-12z" fill="none" stroke="#fff"/><path d="M3 4h11v2H3zM7 1h8v4H7z" fill="#fff"/><path d="M4 8.500h9M4 10.500h9M4 12.500h9" stroke="#fff" stroke-dasharray="2 1"/><circle cx="4" cy="4" r="4" fill="#fff"/></svg>
    <div class="ml-auto flex items-center">
      <div class="w-[41px] h-[26px] flex items-center justify-center bg-[#0a6332]"><svg width="13" height="13"><path d="M.5.5h12v12H.5zM.5 4.500h12M.5 8.500h12M4.500 0v13M8.500 0v13" fill="none" stroke="#fff"/></svg></div>
      <svg class="ml-[13px]" width="14" height="14" fill="none" stroke="#fff"><path d="M.5.5h13v13H.5zM3.500 2.500h7v9h-7zM5 5.500h4M5 7.500h4M5 9.500h4"/></svg>
      <svg class="ml-[27px]" width="14" height="14"><path d="M.5.5h13v13H.5z" fill="none" stroke="#fff"/><path d="M1 1h3v7H1zM5 1h4v7H5z" fill="#fff"/></svg>
      <svg class="ml-[19px]" width="9" height="3"><path d="M0 1.500h9" stroke="#fff" stroke-width="2"/></svg>
      <input type="range" aria-label="Zoom" value="50" class="w-[125px] h-4 mx-1 appearance-none bg-[linear-gradient(#fff,#fff)] bg-no-repeat bg-center bg-size-[100%_1px] [&::-webkit-slider-thumb]:appearance-none [&::-webkit-slider-thumb]:w-[5px] [&::-webkit-slider-thumb]:h-[14px] [&::-webkit-slider-thumb]:bg-white" />
      <svg width="12" height="12"><path d="M6 0v12M0 6h12" stroke="#fff" stroke-width="2"/></svg>
      <span class="w-[50px] pt-px text-right">100 %</span>
    </div>
  </footer>

  <script>
    const columns = [
      ["A", 115], ["B", 133], ["C", 55], ["D", 115], ["E", 23], ["F", 115], ["G", 115], ["H", 95], ["I", 115],
      ["J", 115], ["K", 115], ["L", 115], ["M", 115], ["N", 115], ["O", 115], ["P", 115], ["Q", 115], ["R", 115]
    ];

    // border sets
    const plain = "border-r border-b border-[#d4d4d4]";
    const green = "border-r border-b-2 border-r-[#d4d4d4] border-b-[#c4d79b]";
    const blackBottom = "border-r border-b border-r-[#d4d4d4] border-b-black";
    const head = "border-r border-b border-r-[#bfbfbf] border-b-black bg-[#d9d9d9]";
    const headLast = "border-r border-b border-black bg-[#d9d9d9]";
    const grey = "border-r border-b border-r-[#a0a0a0] border-b-[#d4d4d4]";
    const greenRight = "border-r-2 border-b border-r-[#c4d79b] border-b-[#d4d4d4]";
    const blackRight = "border-r border-b border-r-black border-b-[#d4d4d4]";

    const repeat = (n, cell) => Array.from({ length: n }, () => cell);
    const empty = [1, "", plain, ""];

    // [span, text, borders, alignment]
    const contact = (a, span, f, h) => [
      [span, a, plain, "relative pl-[18px]"], ...repeat(5 - span, empty),
      [2, f, plain, "pl-[63px]"], [2, h, plain, "pl-[3px]"]
    ];
    const body = [...repeat(4, [1, "", grey, ""]), empty, empty, [1, "", greenRight, ""], [1, "", greenRight, ""], [1, "", blackRight, ""]];
    const note = '<svg class="absolute left-0 top-0" width="7" height="7"><path d="M0 0h7L0 7z" fill="red"/></svg>';
    const cursor = '<span class="absolute -inset-[2px] border-2 border-[#217346]"></span><span class="absolute -right-[3px] -bottom-[3px] w-[6px] h-[6px] bg-[#217346] border-t border-l border-white"></span>';

    const rows = [
      [132, []],
      [22, contact(note + "Familie", 1, "Rechnungsdatum:", "05.11.2016")],
      [22, contact(cursor + "Renate Fischer", 2, "Ansprechpartner:", "Frau Ledermüller")],
      [22, contact("Mustergasse 99", 2, "Rechnung Nr.", "0007")],
      [14, []],
      [22, [[2, "99999 Musterhausen", plain, "pl-[18px]"]]],
      [46, []],
      [42, repeat(9, [1, "", green, ""])],
      [42, [[2, "Rechnung", green, "pl-1 pt-[2px] align-middle font-bold text-2xl text-[#1f497d]"], [1, "", green, ""], [6, "Essen Ganztagesschule 2016/2017", green, "pr-[3px] align-middle text-right font-bold text-xl text-[#1f497d]"]]],
      [30, [[1, "Wochentage", green, "pl-[3px]"], [1, "Di + Mi", green, "text-center"]]],
      [110, repeat(9, [1, "", blackBottom, ""])],
      [33, [[1, "Monat", head, "text-center"], [1, "Bezeichnung", head, "pl-[3px]"], [1, "Tage", head, "pr-[3px] text-right"], [1, "Preis", head, "pr-[3px] text-right"], [3, "", head, ""], [1, "Gesamt", head, "pr-[3px] text-right"], [1, "", headLast, ""]]],
      ...repeat(10, [25, body])
    ];

    let html = '<colgroup><col style="width:35px">' + columns.map(c => `<col style="width:${c[1]}px">`).join("") + "</colgroup>";

    html += '<thead><tr style="height:22px"><th class="p-0 border-b border-r border-b-[#ababab] border-r-[#e1e1e1]"><svg class="ml-auto mr-[3px]" width="14" height="14"><path d="M14 0v14H0z" fill="#dcdcdc"/></svg></th>';
    columns.forEach((c, i) => {
      const look = i < 2
        ? "border-r border-b-2 border-r-[#ababab] border-b-[#217346] bg-[#e1e1e1] text-[#217346] font-bold"
        : "border-r border-b border-r-[#e1e1e1] border-b-[#ababab] text-[#444] font-normal";
      html += `<th class="p-0 pt-[2px] ${look}">${c[0]}</th>`;
    });
    html += "</tr></thead><tbody>";

    rows.forEach(([height, cells], r) => {
      const look = r === 2 ? "bg-[#e1e1e1] text-[#217346] font-bold" : "text-[#444] font-normal";
      html += `<tr style="height:${height}px"><th class="p-0 align-bottom border-r border-b border-r-[#ababab] border-b-[#d4d4d4] ${look}"><div class="max-h-5 flex items-end justify-center overflow-hidden" style="height:${height - 1}px">${r + 1}</div></th>`;
      const used = cells.reduce((sum, c) => sum + c[0], 0);
      [...cells, ...repeat(columns.length - used, empty)].forEach(([span, text, borders, align]) => {
        html += `<td colspan="${span}" class="p-0 align-bottom ${borders} ${align}">${text}</td>`;
      });
      html += "</tr>";
    });

    const sheet = document.getElementById("sheet");
    sheet.style.width = columns.reduce((sum, c) => sum + c[1], 35) + "px";
    sheet.innerHTML = html + "</tbody>";

    const fields = [
      ["name", "Name", "Renate Fischer"], ["adresse", "Adresse", "Dorfstr. 7"],
      ["telefon", "Telefon", "08421 336699"], ["plz", "PLZ", "89654"],
      ["email", "E-Mail", "r.fischer_test.de"], ["ort", "Ort", "Testhausen"]
    ];
    document.getElementById("fields").innerHTML = fields.map(([id, label, value]) => `
      <div>
        <label for="${id}" class="block w-[60px] h-5 leading-[18px] bg-[#f0f0f0]">${label}</label>
        <div class="h-[30px] border-2 border-t-[#a0a0a0] border-l-[#a0a0a0] border-r-white border-b-white">
          <input id="${id}" value="${value}" class="block w-full h-full pl-3 pb-1 bg-white border border-t-[#696969] border-l-[#696969] border-r-[#e3e3e3] border-b-[#e3e3e3] font-['Liberation_Sans',sans-serif] text-sm" />
        </div>
      </div>`).join("");
  </script>

</body>
</html>
